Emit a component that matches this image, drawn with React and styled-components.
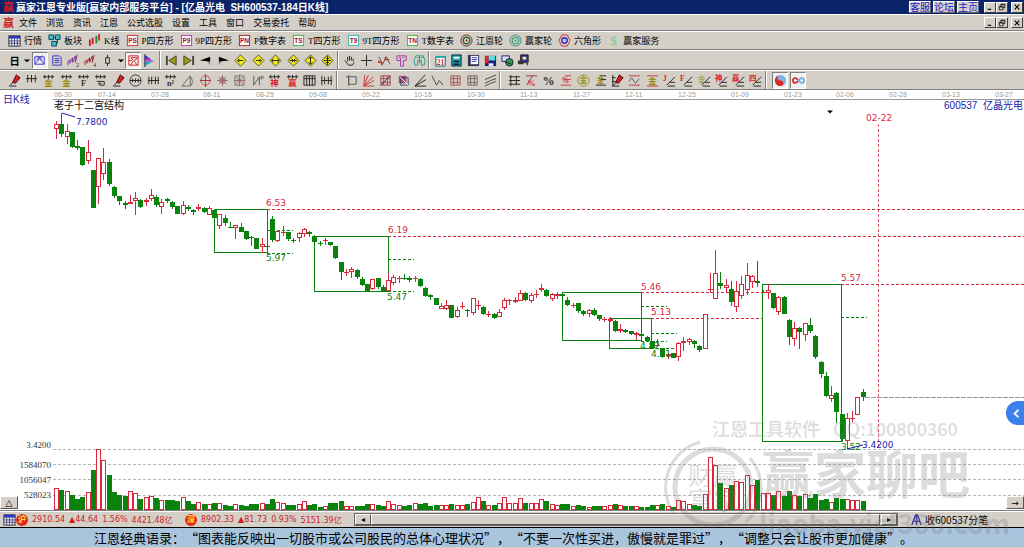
import React from "react";
import styled, { createGlobalStyle } from "styled-components";

const red = "#d8283c";
const green = "#0a820e";

// kind, high, body top, body bottom, low, volume top
const candles = `
r 121 124 129 139 488|g 113 124 134 137 490|r 124 131 137 144 491|g 132 132 147 148 495|g 140 146 148 150 499|g 147 147 165 166 497|r 140 152 161 164 492|g 170 170 208 208 470|r 158 158 187 204 449|r 148 162 174 180 460
g 159 162 184 186 475|g 186 187 196 198 492|g 196 196 201 205 495|g 201 203 205 209 496|r 195 202 203 203 491|r 192 198 201 215 493|g 199 200 207 208 499|r 198 200 202 206 497|r 189 195 199 201 496|g 195 197 205 207 498
r 199 202 207 214 500|g 198 199 200 203 500|g 201 202 207 209 500|g 206 206 214 214 501|r 201 205 214 215 497|g 205 207 208 211 501|g 209 210 211 215 504|r 204 207 209 211 502|g 207 208 212 213 504|r 206 208 215 215 504
g 209 210 218 218 503|r 214 214 226 229 503|g 215 218 223 226 505|g 222 227 227 227 506|r 225 225 228 239 504|g 223 227 232 232 505|g 231 231 239 240 506|g 236 237 237 246 504|g 238 238 249 249 504|r 238 244 247 253 503
g 246 246 246 246 504|g 216 219 240 242 499|r 230 231 241 242 502|r 226 232 232 236 503|g 232 232 239 241 505|g 238 240 240 243 505|r 232 233 238 242 504|r 228 229 234 237 501|g 231 232 234 237 505|g 235 236 242 242 504
g 241 243 243 246 507|r 238 240 240 245 506|g 242 242 245 246 503|g 246 246 258 259 503|g 262 262 272 280 501|r 269 272 272 276 506|r 267 269 272 278 506|g 269 270 277 279 506|g 277 279 285 286 506|g 284 284 291 291 504
r 279 279 289 290 504|g 278 278 287 289 505|g 285 287 291 291 506|r 273 280 291 291 501|r 275 277 283 285 504|r 276 278 278 283 505|g 274 278 278 280 506|g 276 278 280 282 505|r 276 278 278 282 503|g 278 279 286 287 504
g 287 288 296 297 503|g 294 295 297 300 506|g 298 298 305 305 505|r 303 306 309 309 505|r 300 305 309 310 505|g 305 305 318 318 504|r 307 310 317 318 505|r 302 306 306 309 505|g 309 310 310 317 504|r 298 298 313 315 502
r 300 305 305 310 497|g 306 307 314 315 501|r 311 314 314 317 505|g 313 314 318 319 505|r 309 312 317 317 503|r 298 300 308 310 497|r 299 300 300 305 503|r 297 300 302 303 503|r 290 293 301 301 498|g 292 293 300 301 503
r 293 295 301 303 503|r 290 294 294 298 503|r 284 288 290 292 499|g 289 290 296 297 501|r 293 294 299 301 504|r 292 294 295 299 505|g 293 294 296 297 504|g 297 300 305 306 504|r 303 305 305 308 506|g 303 303 311 313 505
g 310 311 314 316 506|r 309 310 314 317 507|g 308 310 315 316 506|g 315 315 319 321 506|r 317 319 319 322 506|r 317 319 320 322 505|g 320 321 331 332 504|r 324 329 331 333 505|g 329 330 332 333 506|g 331 331 334 335 506
r 332 333 334 340 506|g 333 334 336 340 507|g 336 337 341 342 507|g 341 341 348 348 505|r 339 345 345 347 505|g 348 348 357 358 504|r 353 354 356 359 506|g 353 353 358 358 507|r 342 343 357 361 500|r 337 341 343 351 501
r 338 339 342 345 504|g 340 341 344 348 505|g 345 346 350 352 506|r 314 314 349 349 494|r 273 289 289 293 457|r 250 273 299 299 465|g 272 283 286 289 483|r 279 285 288 293 488|g 281 289 302 306 485|r 281 291 307 312 481
r 276 284 296 299 482|r 263 275 290 295 475|r 275 276 282 288 485|g 261 281 283 287 480|r 290 292 292 292 493|r 284 290 293 299 493|g 293 293 308 309 495|r 296 297 312 315 491|g 296 297 314 314 496|g 319 320 337 345 491
r 322 328 339 346 495|g 327 328 332 349 496|r 323 323 335 341 494|g 318 325 331 333 498|g 335 336 357 359 494|g 361 362 374 378 500|g 372 376 396 397 499|r 386 395 399 402 502|g 392 393 412 423 498|g 414 414 439 442 499
r 413 418 441 449 499|r 411 418 418 422 500|r 397 397 415 415 500|g 389 392 397 401 501`
  .trim()
  .split(/[|\n]/)
  .map((row, i) => {
    const [kind, ...nums] = row.split(" ");
    const [high, top, bottom, low, vol] = nums.map(Number);
    return { kind, high, top, bottom, low, vol, x: Math.round(56 + i * 5.273) };
  });

const dates = ["06-30", "07-14", "07-28", "08-11", "08-25", "09-08", "09-22", "10-16", "10-30", "11-13", "11-27", "12-11", "12-25", "01-09", "01-23", "02-06", "02-28", "03-13", "03-27"];

const boxes = [
  [214, 209, 267, 252],
  [314, 236, 388, 291],
  [562, 292, 641, 340],
  [609, 318, 651, 348],
  [762, 284, 841, 441],
];
const resist = [
  [267, 209, 1024],
  [388, 236, 1024],
  [641, 292, 768],
  [651, 318, 762],
  [841, 284, 1024],
];
const support = [
  [267, 230], [267, 253], [388, 259], [388, 291], [641, 306], [651, 333], [641, 341], [651, 348], [841, 317],
];

const GlobalStyle = createGlobalStyle`
  * { box-sizing: border-box; }
  body {
    margin: 0;
    background: #d4d0c8;
    font-family: "Liberation Serif", "Noto Sans CJK SC", sans-serif;
    font-size: 9px;
    color: #000;
  }
  button { font: inherit; color: inherit; margin: 0; padding: 0; }
  svg { display: block; }
`;

const App = () => (
  <Window>
    <GlobalStyle />
    <TitleBar>
      <Brand>赢</Brand>
      <Title>赢家江恩专业版[赢家内部服务平台] - [亿晶光电  SH600537-184日K线]</Title>
      {["客服", "论坛", "主页"].map((t) => (
        <TitleLink href="#" key={t}>{t}</TitleLink>
      ))}
      <WindowButtons />
    </TitleBar>
    <MenuBar>
      <Brand>赢</Brand>
      <Menus>
        {["文件", "浏览", "资讯", "江恩", "公式选股", "设置", "工具", "窗口", "交易委托", "帮助"].map((t) => (
          <MenuItem key={t}>{t}</MenuItem>
        ))}
      </Menus>
      <WindowButtons />
    </MenuBar>
    <Toolbar $height="19px">
      {views.map(([label, icon]) => (
        <ViewButton key={label}>
          <Icon>{icon}</Icon>
          {label}
        </ViewButton>
      ))}
    </Toolbar>
    <ToolRow groups={tools} pad="3px" />
    <ToolRow groups={drawTools} pad="6px" />
    <ChartArea>
      <Chart />
      <CornerButton $side="left" aria-label="展开">△</CornerButton>
      <CornerButton $side="right" aria-label="右移">→</CornerButton>
      <Drawer aria-label="侧栏">
        <Icon><path d="M9 3 5 7l4 4" fill="none" stroke="#fff" strokeWidth="2" /></Icon>
      </Drawer>
    </ChartArea>
    <StatusBar>
      <Quotes>
        <Icon>{table}</Icon>
        <Index badge="沪" values={["2910.54", "▲44.64", "1.56%", "4421.48亿"]} />
        <Index badge="深" values={["8902.33", "▲81.73", "0.93%", "5151.39亿"]} />
      </Quotes>
      <ScrollBar>
        <ScrollButton aria-label="左">◂</ScrollButton>
        <Thumb />
        <ScrollButton aria-label="右">▸</ScrollButton>
      </ScrollBar>
      <Feed>
        <Icon><path d="M2 13 6 2h2l4 11M4 9h6M7 2v11" fill="none" stroke="#3a3a9c" strokeWidth="1.5" /></Icon>
        收600537分笔
      </Feed>
    </StatusBar>
    <Saying>江恩经典语录：“图表能反映出一切股市或公司股民的总体心理状况”，“不要一次性买进，傲慢就是罪过”，“调整只会让股市更加健康”。</Saying>
    <Watermark viewBox="0 0 364 134" aria-hidden="true">
      <g fill="none" stroke="#777">
        <circle cx="53" cy="73" r="38" strokeWidth="5" />
        <path d="M14 100A47 47 0 0 1 40 28M90 44a46 46 0 0 1-4 64" strokeWidth="3" />
      </g>
      <g fill="#777">
        <text x="52" y="22" fontSize="18" fontWeight="500">江恩工具软件</text>
        <text x="173" y="22" fontSize="18" fontWeight="500">QQ:100800360</text>
        <text x="53" y="71" fontSize="25" textAnchor="middle" fontWeight="400">财赢</text>
        <text x="53" y="96" fontSize="25" textAnchor="middle" fontWeight="400">富家</text>
        <text x="102" y="80" fontSize="52" fontWeight="700">赢家聊吧</text>
        <text x="99" y="120" fontSize="27" fontWeight="700">liaoba.yjcf360.com</text>
      </g>
    </Watermark>
  </Window>
);

const WindowButtons = () => (
  <Controls>
    <WinButton aria-label="最小化"><Icon><path d="M3 11h6" stroke="#000" strokeWidth="2" /></Icon></WinButton>
    <WinButton aria-label="还原"><Icon><path d="M5 5V2h7v6H9M5 3h7M2 6h7v6H2zM2 7h7" fill="none" stroke="#000" strokeWidth="1.3" /></Icon></WinButton>
    <WinButton $last aria-label="关闭"><Icon><path d="m3 3 8 8M11 3l-8 8" stroke="#000" strokeWidth="2" /></Icon></WinButton>
  </Controls>
);

const ToolRow = ({ groups, pad }) => (
  <Toolbar $height="20px">
    {groups.map((g, n) => (
      <ToolGroup key={n} $width={g.width} $line={n > 0} $pad={pad}>
        {g.items.map(([name, icon, on], i) => (
          <ToolButton key={i} $on={on} $narrow={name === "更多"} aria-label={name}>
            <Icon>{icon}</Icon>
          </ToolButton>
        ))}
      </ToolGroup>
    ))}
  </Toolbar>
);

const Index = ({ badge, values }) => (
  <IndexBox>
    <Badge>{badge}</Badge>
    {values.map((v) => (
      <span key={v}>{v}</span>
    ))}
  </IndexBox>
);

const Chart = () => (
  <ChartSvg viewBox="0 90 1024 420" role="img" aria-label="亿晶光电 日K线">
    <path d="M53 99.500H1024" stroke="#999" />
    <g fill="#999" fontSize="7" fontFamily="Liberation Sans, sans-serif">
      {dates.map((d, i) => (
        <text key={d} x={i ? Math.round(45 + i * 52.75) : 54} y="97">{d}</text>
      ))}
    </g>
    <g fill="#1a1aae" fontSize="10" fontFamily="Liberation Sans, Noto Sans CJK SC, sans-serif">
      <text x="3" y="103">日K线</text>
      <text x="1023" y="109" textAnchor="end">600537&#160;&#160;亿晶光电</text>
    </g>
    <text x="54" y="109" fontSize="10" fill="#111" fontFamily="Noto Sans CJK SC, sans-serif">老子十二宫结构</text>
    <path d="M827 110.500h6l-3 3z" />
    <g fill="none" strokeDasharray="3 2">
      {[449, 464, 479, 495].map((y) => (
        <path key={y} d={`M53 ${y}.500H1024`} stroke="#b5b5b5" />
      ))}
      <path d="M865 397.500H1024" stroke="#999" strokeDasharray="5 1" />
      {resist.map(([x, y, x2]) => (
        <path key={y} d={`M${x} ${y}.500H${x2}`} stroke={red} />
      ))}
      {support.map(([x, y]) => (
        <path key={x + y} d={`M${x} ${y}.500h26`} stroke={green} />
      ))}
      <path d="M878.500 124V449" stroke={red} strokeOpacity=".75" />
    </g>
    {boxes.map(([x, y, x2, y2]) => (
      <rect key={x} x={x + 0.5} y={y + 0.5} width={x2 - x} height={y2 - y} fill="none" stroke={green} />
    ))}
    {candles.map((c) => (
      <Candle key={c.x} {...c} />
    ))}
    <path d="m62 113 13 4M847 449l16-4" stroke="#1a1aae" />
    <g fontSize="9" fontFamily="DejaVu Sans, sans-serif">
      <g fill={red}>
        <text x="266" y="206">6.53</text>
        <text x="388" y="233">6.19</text>
        <text x="641" y="290">5.46</text>
        <text x="651" y="315">5.13</text>
        <text x="841" y="281">5.57</text>
        <text x="866" y="121">02-22</text>
      </g>
      <g fill={green}>
        <text x="266" y="261">5.97</text>
        <text x="387" y="300">5.47</text>
        <text x="640" y="349">4.82</text>
        <text x="651" y="357">4.71</text>
        <text x="841" y="450">3.52</text>
      </g>
      <g fill="#1a1aae">
        <text x="76" y="125">7.7800</text>
        <text x="862" y="448">3.4200</text>
      </g>
    </g>
    <g fontSize="9" fill="#333" textAnchor="end">
      <text x="51" y="448">3.4200</text>
      <text x="51" y="468">1584070</text>
      <text x="51" y="483">1056047</text>
      <text x="51" y="498">528023</text>
    </g>
  </ChartSvg>
);

const Candle = ({ kind, x, high, top, bottom, low, vol }) => {
  const up = kind === "r";
  const color = up ? red : green;
  const flat = bottom === top;
  return (
    <g stroke={color} fill={up ? "#fff" : color}>
      <path d={`M${x + 0.5} ${high}V${up && !flat ? top : low}M${x + 0.5} ${bottom}V${low}`} />
      {flat ? (
        <path d={`M${x - 2} ${top + 0.5}h5`} />
      ) : (
        <rect x={x - 1.5} y={top + 0.5} width="4" height={Math.max(bottom - top - 1, 1)} />
      )}
      <rect x={x - 1.5} y={vol + 0.5} width="4" height={509 - vol} />
    </g>
  );
};

const Icon = ({ children }) => (
  <IconSvg viewBox="0 0 14 14" aria-hidden="true">{children}</IconSvg>
);

const line = (d, color = "#222", w = 1) => <path d={d} fill="none" stroke={color} strokeWidth={w} />;
const word = (t, color, size = 9, y = 12) => (
  <text x="7" y={y} textAnchor="middle" fontSize={size} fontWeight="700" fill={color}>{t}</text>
);
const letters = (t, color) => (
  <>
    <rect x="1.500" y="1.500" width="11" height="11" fill="#fff8f0" stroke={color} />
    <text x="7" y="10" textAnchor="middle" fontSize="7" fontWeight="700" fontFamily="Liberation Sans" fill="#a01840">{t}</text>
  </>
);
const diamond = (d) => (
  <>
    <path d="m7 1 6 6-6 6-6-6z" fill="#f4ec20" stroke="#55500a" />
    {line(d)}
  </>
);
const comb = "M1 3h12M3 1v4M7 1v4M11 1v4";
const ladder = "M1 5h12M3 1v8M7 1v8M11 1v8";
const fan = "M1 13 12 1M1 13l12-7M1 13h12";
const grid = "M2 2h10v10H2zM2 5h10M2 9h10M5 2v10M9 2v10";
const table = (
  <>
    <rect x="1" y="2" width="12" height="11" fill="#fff" stroke="#223" />
    <path d="M1 3.500h12" stroke="#2838b8" strokeWidth="3" />
    {line("M1 7.500h12M1 10h12M4 5v8M7 5v8M10 5v8", "#447")}
  </>
);
const ring = (a, b) => (
  <>
    <circle cx="7" cy="7" r="6" fill="none" stroke={a} />
    <circle cx="7" cy="7" r="3.500" fill="none" stroke={b} strokeWidth="1.500" />
    <circle cx="7" cy="7" r="1" fill={a} />
  </>
);
const pen = (
  <>
    <path d="M5 9 9 1l4 3-5 6z" fill="#d42020" stroke="#400" />
    {line("M5 9 3 12M1 13h8")}
  </>
);
const zigzag = (n) => (
  <>
    {line("M1 12V8l2-2v4l3-6v5l3-7v7l2-8", n === 2 ? "#7b2c9c" : "#a02838", 1)}
    <text x="10" y="14" fontSize="6" fill="#222">{n}</text>
  </>
);

const views = [
  ["行情", table],
  ["板块", <><path d="M1 1h5v5H1zM8 1h5v5H8zM4 8h5v5H4z" fill="#4bc" stroke="#045" />{line("M6 4h2M10 6v4H9", "#034")}</>],
  ["K线", <>{line("M2 6v7M5 4v7", "#c22", 2)}{line("M9 2v8", "#183", 2)}{line("M12 0v7", "#c22", 2)}</>],
  ["P四方形", letters("PS", "#c33")],
  ["9P四方形", letters("P9", "#b3b")],
  ["P数字表", letters("PN", "#923")],
  ["T四方形", letters("TS", "#3b5")],
  ["9T四方形", letters("T9", "#3bb")],
  ["T数字表", letters("TN", "#3b3")],
  ["江恩轮", ring("#722", "#363")],
  ["赢家轮", ring("#388", "#4a7")],
  ["六角形", <><path d="m4 1 6 0 3 6-3 6H4L1 7z" fill="none" stroke="#c33" /><circle cx="7" cy="7" r="3" fill="#bbf" stroke="#33b" strokeWidth="1.500" /></>],
  ["赢家服务", word("$", "#7fd08a", 14)],
];

const more = ["更多", <path d="M4 6h7L7.500 9z" />];
const tools = [
  {
    width: "154px",
    items: [
      ["周期", word("日", "#000", 11)],
      more,
      ["叠加", line("M2 3h10v8H2zM2 11 7 5l5 6M4 2l6 4M10 2 4 6", "#33c"), true],
      ["信息", line("M3 2h7l2 2v8H3zM5 5h5M5 7h5M5 9h5", "#33c")],
      ["二段", zigzag(2)],
      ["四段", zigzag(4)],
      ["K线样式", line("M5 4h4v6H5zM7 1v3M7 10v3")],
      more,
      ["复权", line("M2 2h10v10H2zM4 12 7 7 4 4h7L8 8l3 4M2 7h3", "#c22"), true],
      ["筹码", <><path d="M2 1l7 5H2z" fill="#33c" /><path d="m2 4 11 4H2z" fill="#d3c" /><path d="M2 8h9l-9 5z" fill="#2aa" />{line("M2 0v14", "#226")}</>],
    ],
  },
  {
    width: "178px",
    items: [
      ["首", <>{line("M2 2v10", "#443", 2)}<path d="m12 2v10L4 7z" fill="#9a9a18" stroke="#443" /></>],
      ["末", <>{line("M12 2v10", "#443", 2)}<path d="m2 2v10l8-5z" fill="#9a9a18" stroke="#443" /></>],
      ["前", <><path d="m12 3v9L8 7z" fill="#888" /><path d="M12 3v5L1 7z" /></>],
      ["后", <><path d="m2 3v9l4-5z" fill="#888" /><path d="M2 3v5l11-1z" /></>],
      ["左移", diamond("M10 7H4l2-2M4 7l2 2")],
      ["右移", diamond("M4 7h6L8 5M10 7 8 9")],
      ["放宽", diamond("M3 7h8M5 5 3 7l2 2M9 5l2 2-2 2")],
      ["压缩", diamond("M3 7h8M5 5l2 2-2 2M9 5 7 7l2 2")],
      ["拉高", diamond("M7 3v8M5 5l2-2 2 2M5 9l2 2 2-2")],
      ["压低", diamond("M3 7h8M7 2v10M5 4l2 2 2-2M5 10l2-2 2 2")],
    ],
  },
  {
    width: "91px",
    items: [
      ["抓手", line("M5 8V3M7 7V2M9 7V3M11 8V5M2 7l4 5h4l2-3")],
      ["十字", line("M7 1v12M1 7h12", "#222")],
      ["波浪", <>{line("M1 3l4 8 4-8 4 8", "#555")}{line("M1 7v2h3v3M8 3v3h4", "#c22", 1.5)}</>],
      ["云一", line("M2 2h10v5H9v6H6V7H2zM4 4h2v5M8 4h2", "#a3a")],
      ["云二", line("M3 2h8l2 5-1 5H9V7H5v5H2L1 7zM7 2v8M4 4h2M8 4h3", "#2a9a8c")],
    ],
  },
  {
    width: "105px",
    items: [
      ["日历", <><path d="M2 3h10v10H2z" fill="#fff" stroke="#157" />{line("M2 3h11", "#1aa", 2)}{word("21", "#c22", 8)}</>],
      ["计算器", <><path d="M2 1h10v12H2z" fill="#2aa" stroke="#023" /><path d="M4 3h6v2H4z" fill="#fff" />{line("M4 8h6M4 11h6", "#013", 1.5)}</>],
      ["记事", <><path d="M1 1h12v12H1z" fill="#335" /><path d="M4 2h8v9H4z" fill="#fff" />{line("M5 4h6M5 6h6M5 8h5", "#33c")}</>],
      ["保存", <><path d="M1 2h12v11H1z" fill="#128" /><path d="M1 2h4v8H1z" fill="#e22" /><path d="M5 2h7v5H5z" fill="#5dd" /><path d="M5 10h5v3H5z" fill="#eee" /></>],
      ["分屏", <><path d="M1 2h8v6H1z" fill="#dde" stroke="#228" /><circle cx="9" cy="9" r="4" fill="#395" stroke="#122" />{line("m4 8 7 3")}</>],
      ["打印", <><path d="M4 1h8v8H4z" fill="#33a" stroke="#111" /><path d="M6 3h4v3H6z" fill="#ee6" /><path d="M1 7h6v4H1z" fill="#333" /><path d="M8 9h4v4z" fill="#555" /></>],
    ],
  },
];

const underComb = (t, color) => <>{line(comb)}{word(t, color, 9, 13)}</>;
const withFan = (t) => <>{line("M4 12 13 3M5 13h8M7 9h6")}<text x="0" y="8" fontSize="8" fontWeight="700" fill="#d22">{t}</text></>;
const burst = (c) => line("M7 1v12M1 7h12M3 3l8 8M11 3l-8 8", c);
const drawTools = [
  {
    width: "331px",
    items: [
      ["画笔", pen],
      ["刻度", line(ladder)],
      ["金一", underComb("金", "#998c10")],
      ["金二", underComb("金", "#998c10")],
      ["F", underComb("F", "#333")],
      ["螺旋", <>{line(comb)}{line("M3 8h8v4H6l-1-2h3")}</>],
      ["笔尺", pen],
      ["圆尺", <>{line("M1 7h12M4 5v4M7 5v4M10 5v4")}<circle cx="7" cy="7" r="6" fill="none" stroke="#333" /></>],
      ["四线", line("M1 7h12M2 3v8M5 3v8M9 3v8M12 3v8")],
      ["平方", underComb("n²", "#333")],
      ["角度", line("M1 13 10 2v11zM10 3c3 3 3 7 0 10", "#666")],
      ["十字圆", <><circle cx="7" cy="7" r="5" fill="none" stroke="#c44" />{line("M7 0v14M1 7h12", "#a33")}</>],
      ["星", <>{burst("#a66")}<circle cx="7" cy="7" r="3" fill="none" stroke="#666" /></>],
      ["网格星", <>{burst("#966")}{line("M2 2h10v10H2z", "#777")}</>],
      ["折", line("M3 2v10L9 3v9M11 2v4M13 2v3", "#555")],
      ["神", underComb("神", "#d22")],
      ["赢", underComb("赢", "#d22")],
      ["四", line("M1 2h12v10H1zM4 2v10M7 2v10M10 2v10M1 5h12")],
      ["对称", line("M2 2v10M5 3v8M9 3v8M12 2v10M1 7h12")],
    ],
  },
  {
    width: "163px",
    items: [
      ["方框", line("M4 3h8v8H4zM1 3h3M4 1v12", "#555")],
      ["射线", line("M2 13 3 1M2 13 7 1M2 13 12 3M2 13l11-6M2 13h11", "#c33")],
      ["方射", <>{line(grid, "#a44")}{line("M2 12 12 2", "#33a")}</>],
      ["色块", <><path d="M2 2h8v8H2z" fill="#a46" />{line("M4 4h8v8H4z", "#347")}{line("m3 3 9 9", "#fff")}</>],
      ["扇", line(fan)],
      ["折线", line("M1 2l5 10 3-5 4 5", "#444")],
      ["网一", line(grid, "#a55")],
      ["网二", line(grid, "#766")],
      ["平行", line("M1 6 6 4l7-3M1 10 7 7l6-2M1 13l6-3 6-2", "#444")],
    ],
  },
  {
    width: "266px",
    items: [
      ["标尺", line("M3 1v12M1 3h12M1 7h12M1 11h12M9 2v10", "#222")],
      ["比例线", <>{line("M1 2h12M2 12 8 2", "#933")}{word("%", "#c33", 9, 13)}</>],
      ["百分", word("%", "#333", 13)],
      ["百分线", <>{line("M6 2h7M6 6h7M2 12h11", "#c33")}{word("%", "#c22", 8, 10)}</>],
      ["金圆", <><circle cx="7" cy="7" r="6" fill="none" stroke="#998c10" />{word("金", "#998c10", 8, 10)}</>],
      ["金线", <>{line("M6 2h7M6 6h7M2 12h11")}{word("金", "#998c10", 8, 10)}</>],
      ["笔", <>{line("M2 1v12M1 4h4M1 8h4")}{pen}</>],
      ["波段", <>{line("M1 2h12M1 12h12", "#c33")}{line("M1 8l3-4 4 6 4-5", "#555")}</>],
      ["金横", <>{line("M1 2h12M1 13h12", "#c33")}{word("金", "#998c10", 9, 11)}</>],
      ["J扇", withFan("J")],
      ["F扇", withFan("F")],
      ["金扇", <>{line("M4 12 13 3M5 13h8M7 9h6")}<text x="0" y="9" fontSize="8" fill="#998c10">金</text></>],
      ["神扇", withFan("神")],
      ["赢扇", withFan("赢")],
      ["四扇", withFan("四")],
    ],
  },
  {
    width: "42px",
    items: [
      ["太极", <><circle cx="7" cy="7" r="6" fill="#7ab5ea" /><path d="M7 1a6 6 0 0 0 0 12 3 3 0 0 0 0-6 3 3 0 0 1 0-6" fill="#e02828" /></>, true],
      ["无穷", <>{line("M7 7C4 3 1 4 1 7s3 4 6 0", "#d33", 2)}{line("M7 7c3-4 6-3 6 0s-3 4-6 0", "#6ab0e8", 2)}</>, true],
    ],
  },
];

const Window = styled.div`
  position: relative;
  display: flex;
  flex-direction: column;
  overflow: hidden;
  background: #d4d0c8;
`;

const TitleBar = styled.header`
  display: flex;
  align-items: center;
  gap: 2px;
  height: 14px;
  padding: 0 1px 0 3px;
  background: #0a246a;
  color: #fff;
`;

const Brand = styled.span`
  font-size: 11px;
  line-height: 12px;
  font-weight: 700;
  color: #d02020;
`;

const Title = styled.h1`
  flex: 1;
  margin: 0;
  font-family: "Liberation Sans", "Noto Sans CJK SC", sans-serif;
  font-size: 10px;
  line-height: 13px;
  font-weight: 700;
  white-space: pre;
`;

const TitleLink = styled.a`
  width: 22px;
  height: 12px;
  line-height: 11px;
  text-align: center;
  font-size: 10px;
  color: #2020c8;
  background: #d4d0c8;
  border: 1px solid #888;
  border-color: #fff #666 #666 #fff;
  text-decoration: none;
`;

const MenuBar = styled.nav`
  display: flex;
  align-items: center;
  height: 17px;
  padding: 0 1px 0 3px;
  border-top: 1px solid #fff;
  border-bottom: 1px solid #808080;
`;

const Menus = styled.div`
  display: flex;
  flex: 1;
  gap: 9px;
  padding-left: 5px;
`;

const MenuItem = styled.button`
  border: 0;
  background: none;
  line-height: 14px;
  white-space: nowrap;
`;

const Controls = styled.div`
  display: flex;
  margin-left: 3px;
`;

const WinButton = styled.button`
  display: flex;
  align-items: center;
  justify-content: center;
  width: 12px;
  height: 11px;
  margin-left: ${(props) => (props.$last ? "3px" : "0")};
  background: #d4d0c8;
  border: 1px solid;
  border-color: #fff #404040 #404040 #fff;

  svg {
    width: 8px;
    height: 8px;
  }
`;

const Toolbar = styled.div`
  display: flex;
  align-items: center;
  height: ${(props) => props.$height};
  padding-left: 5px;
  border-top: 1px solid #fff;
  border-bottom: 1px solid #808080;
`;

const ViewButton = styled.button`
  display: flex;
  align-items: center;
  gap: 3px;
  padding: 0 3px;
  border: 0;
  background: none;
  line-height: 14px;
  white-space: nowrap;
`;

const ToolGroup = styled.div`
  display: flex;
  flex: none;
  align-items: center;
  justify-content: space-between;
  width: ${(props) => props.$width};
  height: 18px;
  padding: 0 1px 0 ${(props) => (props.$line ? props.$pad : "1px")};
  border-left: ${(props) => (props.$line ? "1px solid #808080" : "0")};
  box-shadow: ${(props) => (props.$line ? "inset 1px 0 #fff" : "none")};
`;

const ToolButton = styled.button`
  display: flex;
  align-items: center;
  justify-content: center;
  width: ${(props) => (props.$narrow ? "8px" : "16px")};
  height: 17px;
  border: 1px solid;
  border-color: ${(props) => (props.$on ? "#808080 #fff #fff #808080" : "transparent")};
  background: ${(props) => (props.$on ? "#f2f0ee" : "none")};
`;

const IconSvg = styled.svg`
  flex: none;
  width: 13px;
  height: 13px;
`;

const ChartArea = styled.main`
  position: relative;
  background: #fff;
  border-bottom: 1px solid #808080;
`;

const ChartSvg = styled.svg`
  width: 100%;
  height: auto;
`;

const CornerButton = styled.button`
  position: absolute;
  bottom: 1px;
  ${(props) => props.$side}: 0;
  width: 18px;
  height: 13px;
  line-height: 10px;
  font-family: "DejaVu Sans", sans-serif;
  background: #d4d0c8;
  border: 1px solid;
  border-color: #fff #555 #555 #fff;
`;

const Drawer = styled.button`
  position: absolute;
  right: 0;
  bottom: 85px;
  display: flex;
  align-items: center;
  width: 18px;
  height: 24px;
  padding-left: 4px;
  border: 0;
  border-radius: 12px 0 0 12px;
  background: #3c80ee;
`;

const StatusBar = styled.footer`
  display: flex;
  height: 16px;
  border-top: 1px solid #fff;
`;

const Quotes = styled.div`
  display: flex;
  align-items: center;
  flex: none;
  width: 354px;
  padding-left: 3px;
  font-family: "DejaVu Sans", "Noto Sans CJK SC", sans-serif;
  font-size: 8px;
  color: #d01c1c;
  white-space: nowrap;
`;

const IndexBox = styled.div`
  display: flex;
  flex: 1;
  align-items: center;
  gap: 4px;
`;

const Badge = styled.b`
  width: 12px;
  height: 12px;
  border-radius: 6px;
  line-height: 12px;
  text-align: center;
  color: #ffe040;
  background: #e02818;
`;

const ScrollBar = styled.div`
  display: flex;
  flex: 1;
  margin: 1px 12px 1px 0;
  border: 1px solid #666;
`;

const ScrollButton = styled.button`
  width: 16px;
  border: 1px solid;
  border-color: #fff #555 #555 #fff;
  background: #d4d0c8;
  font-family: "DejaVu Sans", sans-serif;
  font-size: 8px;
  line-height: 8px;
`;

const Thumb = styled.div`
  flex: 1;
  margin-right: 1px;
  border: 1px solid;
  border-color: #fff #555 #555 #fff;
`;

const Feed = styled.div`
  display: flex;
  align-items: center;
  gap: 2px;
  width: 114px;
  font-family: "Noto Sans CJK SC", sans-serif;
  font-size: 10px;
  line-height: 14px;
`;

const Saying = styled.p`
  margin: 0;
  padding-left: 94px;
  height: 21px;
  line-height: 20px;
  font-family: "Noto Sans CJK SC", sans-serif;
  font-size: 13px;
  text-spacing-trim: space-all;
  white-space: nowrap;
  overflow: hidden;
  background: #a9c4dd;
  border-top: 1px solid #000;
  border-bottom: 1px solid #d4d0c8;
`;

const Watermark = styled.svg`
  position: absolute;
  right: 0;
  bottom: 0;
  width: 364px;
  height: 134px;
  opacity: 0.25;
  pointer-events: none;
  font-family: "Noto Sans CJK SC", sans-serif;
`;

export default App;
